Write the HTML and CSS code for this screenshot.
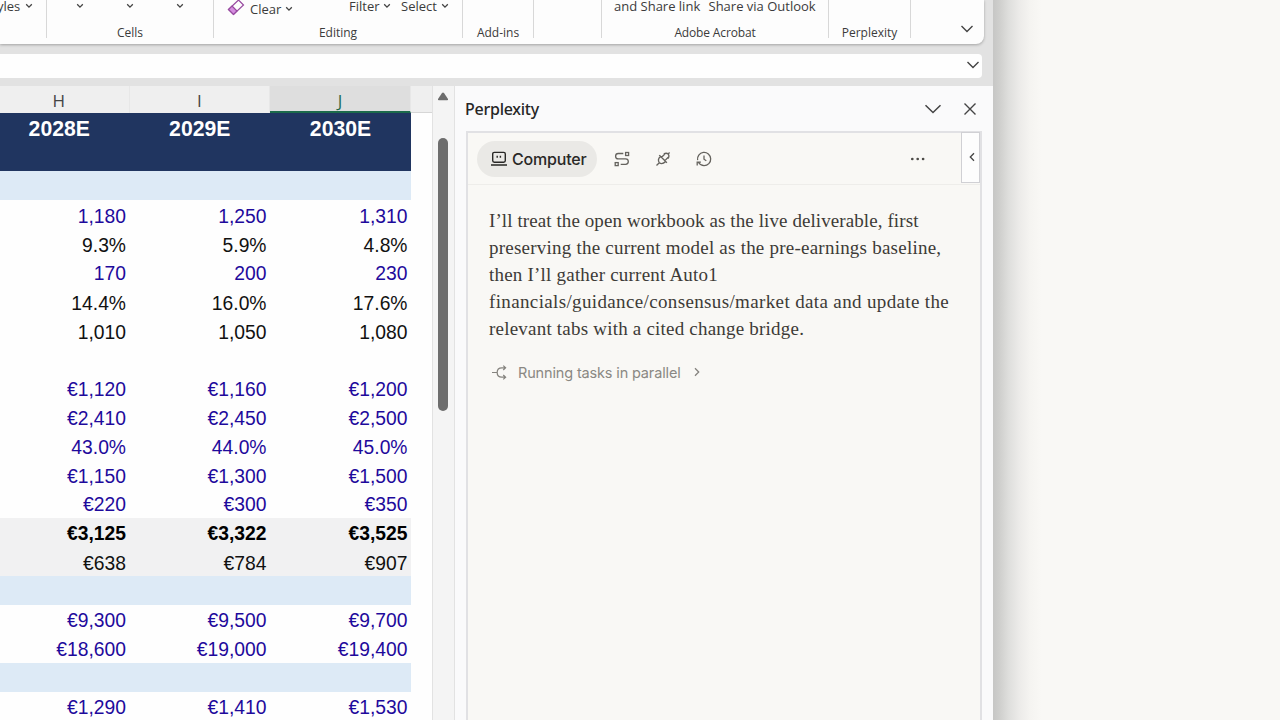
FILE: index.html
```html
<!DOCTYPE html>
<html lang="en">
<head>
<meta charset="utf-8">
<title>Workbook</title>
<link rel="stylesheet" href="styles.css">
</head>
<body>
<div class="window">
  <div class="ribbon">
    <div class="group g-styles"><div class="cmds"><span class="t-styles">yles</span><svg class="chev" viewBox="0 0 8 6"><path d="M1.2 1.3 4 4.1 6.8 1.3"/></svg></div></div>
    <div class="group g-cells"><div class="cmds spread"><svg class="chev" viewBox="0 0 8 6"><path d="M1.2 1.3 4 4.1 6.8 1.3"/></svg><svg class="chev" viewBox="0 0 8 6"><path d="M1.2 1.3 4 4.1 6.8 1.3"/></svg><svg class="chev" viewBox="0 0 8 6"><path d="M1.2 1.3 4 4.1 6.8 1.3"/></svg></div><div class="label">Cells</div></div>
    <div class="group g-edit"><div class="cmds">
      <svg class="eraser" viewBox="0 0 18 18"><path class="body" d="M11.5 1 16.5 6 6.500 15.500 1.500 10.500Z"/><path class="tip" d="M5 7 10 12 6.500 15.500 1.500 10.500Z"/></svg>
      <span class="t-clear">Clear</span><svg class="chev low" viewBox="0 0 8 6"><path d="M1.2 1.3 4 4.1 6.8 1.3"/></svg>
      <span class="t-filter">Filter</span><svg class="chev" viewBox="0 0 8 6"><path d="M1.2 1.3 4 4.1 6.8 1.3"/></svg>
      <span class="t-select">Select</span><svg class="chev" viewBox="0 0 8 6"><path d="M1.2 1.3 4 4.1 6.8 1.3"/></svg>
    </div><div class="label">Editing</div></div>
    <div class="group g-add"><div class="cmds"></div><div class="label">Add-ins</div></div>
    <div class="group g-blank"></div>
    <div class="group g-adobe"><div class="cmds"><span class="t-share">and Share link</span><span class="t-outlook">Share via Outlook</span></div><div class="label">Adobe Acrobat</div></div>
    <div class="group g-pplx"><div class="cmds"></div><div class="label">Perplexity</div></div>
    <div class="ribbon-end"><svg class="chev-lg" viewBox="0 0 14 10"><path d="M1.500 2 7 7.500 12.500 2"/></svg></div>
  </div>
  <div class="formula"><svg class="chev-lg" viewBox="0 0 14 10"><path d="M1.500 2 7 7.500 12.500 2"/></svg></div>
  <div class="work">
    <div class="sheet">
      <div class="row cols"><span>H</span><span>I</span><span class="active">J</span></div>
      <div class="row years"><span>2028E</span><span>2029E</span><span>2030E</span></div>
      <div class="row band"></div>
      <div class="row in low"><span>1,180</span><span>1,250</span><span>1,310</span></div>
      <div class="row low"><span>9.3%</span><span>5.9%</span><span>4.8%</span></div>
      <div class="row in"><span>170</span><span>200</span><span>230</span></div>
      <div class="row low"><span>14.4%</span><span>16.0%</span><span>17.6%</span></div>
      <div class="row low"><span>1,010</span><span>1,050</span><span>1,080</span></div>
      <div class="row"></div>
      <div class="row in low"><span>€1,120</span><span>€1,160</span><span>€1,200</span></div>
      <div class="row in low"><span>€2,410</span><span>€2,450</span><span>€2,500</span></div>
      <div class="row in low"><span>43.0%</span><span>44.0%</span><span>45.0%</span></div>
      <div class="row in low"><span>€1,150</span><span>€1,300</span><span>€1,500</span></div>
      <div class="row in"><span>€220</span><span>€300</span><span>€350</span></div>
      <div class="row gray total"><span>€3,125</span><span>€3,322</span><span>€3,525</span></div>
      <div class="row gray low"><span>€638</span><span>€784</span><span>€907</span></div>
      <div class="row band"></div>
      <div class="row in"><span>€9,300</span><span>€9,500</span><span>€9,700</span></div>
      <div class="row in"><span>€18,600</span><span>€19,000</span><span>€19,400</span></div>
      <div class="row band"></div>
      <div class="row in"><span>€1,290</span><span>€1,410</span><span>€1,530</span></div>
    </div>
    <div class="gutter"><div class="corner"></div></div>
    <div class="scroll"><svg class="up" viewBox="0 0 12 9"><path d="M5 1Q6 0 7 1L11 7Q11.500 8.300 10 8.300H2Q.5 8.300 1 7Z"/></svg><div class="thumb"></div></div>
    <div class="pane">
      <div class="pane-head"><span class="title">Perplexity</span>
        <svg class="down" viewBox="0 0 18 12"><path d="M1.500 2.200 9 9.500 16.500 2.200"/></svg>
        <svg class="close" viewBox="0 0 14 14"><path d="M1.500 1.500 12.500 12.500M12.500 1.500 1.500 12.500"/></svg></div>
      <div class="frame">
        <div class="toolbar">
          <div class="pill"><svg class="i-comp" viewBox="0 0 18 16"><rect x="2.700" y="1.400" width="12.600" height="9.800" rx="1.600"/><path d="M1 14H17M7.200 4.800V6.800M10.400 4.800V6.800"/></svg><span>Computer</span></div>
          <svg class="ic i-route" viewBox="0 0 16 16"><rect x="11.600" y="1.500" width="3" height="3"/><rect x="1.200" y="11.600" width="3" height="3"/><path d="M9.300 2.500H4.300A2.700 2.700 0 0 0 4.300 7.900H11.600A2.700 2.700 0 0 1 11.600 13.300H6.700"/></svg>
          <svg class="ic i-plug" viewBox="0 0 16 16"><path d="M1.500 14.500 4.300 11.700M4.300 11.700C2.400 9.300 3.300 7.600 5.400 5.300L10.700 10.600C8.400 12.700 6.700 13.600 4.300 11.700M4.200 4.100 11.900 11.800M6.600 6.300 9.900 3M9.900 9.600 13.200 6.300M8.800 2.900C10.500 2 12.300 2.200 13.200 3.100C14 4 14.200 5.600 13.200 7.300M13.100 3 14.600 1.500"/></svg>
          <svg class="ic i-hist" viewBox="0 0 16 16"><path d="M1.600 9.200A6.600 6.600 0 1 1 8 14.600C5.800 14.600 3.800 13.500 2.500 11.500M1.200 14.600V11.100H4.900M8 4.500V8.200L10.300 9.700"/></svg>
          <svg class="dots" viewBox="0 0 16 4"><circle cx="2.300" cy="2" r="1.350"/><circle cx="7.700" cy="2" r="1.350"/><circle cx="13.100" cy="2" r="1.350"/></svg>
          <div class="tab"><svg viewBox="0 0 6 10"><path d="M5 1.300 1.300 5 5 8.700"/></svg></div>
        </div>
        <div class="message">
          <div class="l1">I’ll treat the open workbook as the live deliverable, first</div>
          <div class="l2">preserving the current model as the pre-earnings baseline,</div>
          <div class="l3">then I’ll gather current Auto1</div>
          <div class="l4">financials/guidance/consensus/market data and update the</div>
          <div class="l5">relevant tabs with a cited change bridge.</div>
        </div>
        <div class="status"><svg class="i-split" viewBox="0 0 18 16"><path d="M1 8H6.500M15.500 3H11.500C8.500 3 6.500 5 6.500 8C6.500 11 8.500 13 11.500 13H15.500M13 .7 15.500 3 13 5.300M13 10.700 15.500 13 13 15.300"/></svg><span>Running tasks in parallel</span><svg class="i-next" viewBox="0 0 6 10"><path d="M1 1.300 4.700 5 1 8.700"/></svg></div>
      </div>
    </div>
  </div>
</div>
<div class="shade"></div>
</body>
</html>
```
FILE: styles.css
```css
* { box-sizing: border-box; }
body { margin: 0; width: 1280px; height: 720px; overflow: hidden; background: #f9f8f5; font-family: "Open Sans", sans-serif; color: #3b3b3b; display: flex; }
svg { display: block; flex: none; fill: none; stroke: #444; overflow: visible; }
.window { width: 993px; height: 720px; flex: none; background: #e2e2e2; display: flex; flex-direction: column; }
.shade { width: 48px; height: 720px; background: linear-gradient(90deg, #c6c6c5 0, #cfcfcd 14%, #dededc 32%, #ecebe9 55%, #f5f4f1 78%, #f9f8f5 100%); }

.ribbon { width: 984px; height: 44px; flex: none; display: flex; background: #fdfdfd; border-radius: 0 0 8px 0; box-shadow: 0 1px 3px rgba(0,0,0,.28); }
.group { height: 38px; border-right: 1px solid #d8d8d8; flex: none; white-space: nowrap; }
.g-styles { width: 47px; } .g-cells { width: 167px; } .g-edit { width: 249px; } .g-add { width: 71px; } .g-blank { width: 68px; } .g-adobe { width: 227px; } .g-pplx { width: 82px; }
.cmds { height: 23px; display: flex; align-items: flex-start; font-size: 13px; line-height: 18px; margin-top: -3px; }
.cmds span { flex: none; }
.label { height: 18px; line-height: 18px; margin-top: 4px; font-size: 12px; text-align: center; }
.g-adobe .label { letter-spacing: -.15px; }
.chev { width: 8px; height: 6px; margin-top: 6px; stroke-width: 1.3; }
.chev.low { margin-top: 9px; margin-left: 3px; }
.t-styles { width: 25px; margin-left: -3px; margin-right: 3px; }
.spread { padding-left: 29px; gap: 42px; }
.eraser { width: 18px; height: 18px; margin: 2px 0 0 13px; stroke: #984aa0; stroke-width: 1.2; }
.tip { fill: #d58ee0; }
.t-clear { margin: 3px 0 0 5px; width: 32px; }
.t-filter { margin-left: 56px; width: 32px; margin-right: 2px; }
.t-select { margin-left: 10px; width: 39px; margin-right: 1px; }
.t-share { margin-left: 12px; width: 94.500px; }
.ribbon-end { padding: 24px 0 0 49px; }
.chev-lg { width: 14px; height: 10px; stroke-width: 1.4; }
.formula { width: 982px; height: 24px; margin-top: 10px; background: #fefefe; border-radius: 0 4px 4px 0; flex: none; display: flex; justify-content: flex-end; padding: 6px 2px 0 0; }

.work { margin-top: 8px; height: 634px; display: flex; }
.sheet { width: 411px; background: #fefefe; font-family: "Liberation Sans", Arial, sans-serif; font-size: 19.3px; color: #111; }
.row { height: 28.93px; display: grid; grid-template-columns: 129.5px 140.5px 141px; line-height: 32px; text-align: right; }
.row span { padding-right: 3.500px; }
.row.low { line-height: 34px; }
.in { color: #1e0a9c; }
.cols { height: 27px; background: #efefef; font-family: "Open Sans", sans-serif; font-size: 17px; line-height: 29px; color: #444; text-align: center; }
.cols span { height: 27px; padding: 0; border-right: 1px solid #e7e7e7; }
.cols span:first-child, .years span:first-child { margin-left: -11px; }
.cols .active { background: #dedede; border-bottom: 2px solid #1c6b4b; color: #1f6b4d; }
.years { height: 58px; background: #203560; color: #fff; font-size: 21.2px; font-weight: bold; text-align: center; line-height: 32px; }
.years span { padding: 0; }
.band { background: #ddeaf6; }
.gray { background: #f1f1f2; }
.total { font-weight: bold; color: #000; line-height: 31px; }
.gutter { width: 22px; background: #fefefe; border-right: 1px solid #e2e2e2; }
.corner { height: 27px; background: #efefef; border-bottom: 1px solid #d6d6d6; }
.scroll { width: 21px; background: #f4f4f4; padding: 6px 0 0 4px; }
.up { width: 12px; height: 9px; fill: #6c6c6c; stroke: none; }
.thumb { width: 10px; height: 273px; margin: 37px 0 0 1px; border-radius: 5px; background: #6d6d6d; }
.pane { width: 539px; background: #fafafb; border-left: 1px solid #e2e2e2; }
.pane-head { height: 45px; display: flex; align-items: center; padding: 1px 0 0 10px; }
.title { width: 459px; font: 500 16px/22px "Noto Sans", sans-serif; color: #262626; letter-spacing: -.25px; }
.down { width: 18px; height: 12px; stroke-width: 1.5; }
.close { width: 14px; height: 14px; margin-left: 21px; stroke-width: 1.4; }
.frame { width: 516px; height: 589px; margin-left: 11px; background: #f9f8f5; border: 2px solid #e1e1e4; border-width: 2px 2px 0 2px; }
.toolbar { height: 52px; border-bottom: 1px solid #eeedea; display: flex; align-items: center; padding-left: 9px; }
.pill { width: 124px; height: 36px; border-radius: 18px; background: #eae9e6; display: flex; align-items: center; padding-left: 13px; font: 500 16px Inter, sans-serif; letter-spacing: -.2px; color: #292826; }
.i-comp { width: 18px; height: 16px; margin-right: 4px; stroke: #292826; stroke-width: 1.4; }
.ic { width: 16px; height: 16px; stroke: #65635e; stroke-width: 1.3; }
.i-route { margin-left: 17px; } .i-plug { margin-left: 25px; } .i-hist { margin-left: 25px; }
.dots { width: 16px; height: 4px; margin-left: 198px; fill: #4d4b47; stroke: none; }
.tab { width: 19px; height: 51px; margin: -2px 0 0 35px; border: 1.500px solid #d0d0d4; background: #fdfdfd; padding: 19px 0 0 7px; }
.tab svg { width: 6px; height: 10px; stroke-width: 1.3; }
.message { padding: 22px 0 0 21px; font: 19px/27px "Liberation Serif", serif; color: #3d3b37; white-space: nowrap; }
.l1 { letter-spacing: .09px; } .l2 { letter-spacing: .23px; } .l3 { letter-spacing: .21px; } .l4 { letter-spacing: .36px; } .l5 { letter-spacing: .21px; }
.status { height: 20px; margin-top: 20px; padding-left: 23px; display: flex; align-items: center; font: 14.500px Inter, sans-serif; letter-spacing: -.15px; color: #8a8883; }
.i-split { width: 17px; height: 15px; margin-right: 10px; stroke: #85837e; stroke-width: 1.3; }
.i-next { width: 6px; height: 10px; margin-left: 13px; stroke: #85837e; stroke-width: 1.3; }
```
